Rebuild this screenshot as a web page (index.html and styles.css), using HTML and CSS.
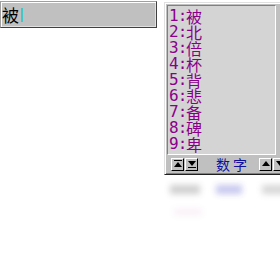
FILE: index.html
```html
<!DOCTYPE html>
<html>
<head>
<meta charset="utf-8">
<link rel="stylesheet" href="styles.css">
</head>
<body>
<div class="page">
  <div class="input">
    <span class="comp">被</span><span class="caret"></span>
  </div>
  <div class="cand-wrap">
    <div class="cand">
      <div class="list">
        <div class="row"><span class="num">1:</span><span class="ch">被</span></div>
        <div class="row"><span class="num">2:</span><span class="ch">北</span></div>
        <div class="row"><span class="num">3:</span><span class="ch">倍</span></div>
        <div class="row"><span class="num">4:</span><span class="ch">杯</span></div>
        <div class="row"><span class="num">5:</span><span class="ch">背</span></div>
        <div class="row"><span class="num">6:</span><span class="ch">悲</span></div>
        <div class="row"><span class="num">7:</span><span class="ch">备</span></div>
        <div class="row"><span class="num">8:</span><span class="ch">碑</span></div>
        <div class="row"><span class="num">9:</span><span class="ch">卑</span></div>
      </div>
      <div class="bar">
        <span class="btn"><svg width="8" height="8" viewBox="0 0 8 8"><rect x="0" y="0" width="8" height="1" fill="#000"/><path d="M4 2 L8 7 L0 7 Z" fill="#000"/></svg></span>
        <span class="btn"><svg width="8" height="8" viewBox="0 0 8 8"><path d="M0 1 L8 1 L4 6 Z" fill="#000"/><rect x="0" y="7" width="8" height="1" fill="#000"/></svg></span>
        <span class="mode">数字</span>
        <span class="btn"><svg width="8" height="6" viewBox="0 0 8 6"><path d="M4 0 L8 5 L0 5 Z" fill="#000"/></svg></span>
        <span class="btn"><svg width="8" height="6" viewBox="0 0 8 6"><path d="M0 0 L8 0 L4 5 Z" fill="#000"/></svg></span>
      </div>
    </div>
    <div class="ghost">
      <span class="g1"></span><span class="g2"></span><span class="g3"></span><span class="g4"></span>
    </div>
  </div>
</div>
</body>
</html>
```
FILE: styles.css
```css
html, body {
  margin: 0;
  padding: 0;
  background: #fff;
  width: 280px;
  height: 258px;
  overflow: hidden;
}
.page {
  display: flex;
  align-items: flex-start;
  gap: 7px;
  width: 280px;
}
.input {
  flex: none;
  margin-top: 1px;
  width: 154px;
  height: 25px;
  background: #c0c0c0;
  border: 1px solid;
  border-color: #a0a0a0 #404040 #404040 #a0a0a0;
  box-shadow: inset 1px 1px 0 #fff, inset -1px -1px 0 #e0e0e0;
  display: flex;
  align-items: center;
  padding-left: 1px;
}
.comp {
  font-family: "Noto Sans CJK SC", sans-serif;
  font-size: 17px;
  line-height: 20px;
  color: #000;
}
.caret {
  width: 2px;
  height: 14px;
  background: #40c8c8;
  margin-left: 2px;
}
.cand-wrap {
  flex: none;
  width: 130px;
  margin-top: 2px;
}
.cand {
  background: #c0c0c0;
  border: 1px solid;
  border-color: #e0e0e0 #404040 #202020 #e0e0e0;
  box-shadow: inset 1px 1px 0 #fff, inset -1px -1px 0 #808080;
  padding: 2px 0 1px 2px;
}
.list {
  background: #d4d4d4;
  border: 1px solid;
  border-color: #808080 #fff #fff #808080;
  width: 106px;
  padding: 2px 0 2px 1px;
}
.row {
  height: 16px;
  display: flex;
  align-items: center;
  color: #8a008a;
}
.num {
  font-family: "DejaVu Sans Mono", monospace;
  font-size: 16px;
  line-height: 16px;
  width: 17px;
  letter-spacing: -1px;
}
.ch {
  font-family: "Noto Sans CJK SC", sans-serif;
  font-size: 16px;
  line-height: 16px;
}
.bar {
  display: flex;
  align-items: center;
  height: 18px;
  padding-left: 4px;
}
.btn {
  width: 11px;
  height: 11px;
  background: #c0c0c0;
  border: 1px solid;
  border-color: #fff #000 #000 #fff;
  display: flex;
  align-items: center;
  justify-content: center;
  margin-right: 1px;
}
.mode {
  font-family: "Noto Sans CJK SC", sans-serif;
  font-size: 14px;
  line-height: 16px;
  color: #1010a0;
  letter-spacing: 3px;
  margin: 0 9px 0 17px;
}
.ghost {
  margin-top: 4px;
  height: 50px;
  position: relative;
  filter: blur(3px);
  opacity: 0.25;
}
.ghost span {
  position: absolute;
}
.g1 { top: 6px; height: 9px; left: 6px; width: 30px; background: #404040; }
.g2 { top: 6px; height: 9px; left: 52px; width: 26px; background: #2020c0; }
.g3 { top: 6px; height: 9px; left: 98px; width: 30px; background: #606060; }
.g4 { top: 30px; height: 6px; left: 10px; width: 28px; background: #d080c0; opacity: 0.5; }
```
